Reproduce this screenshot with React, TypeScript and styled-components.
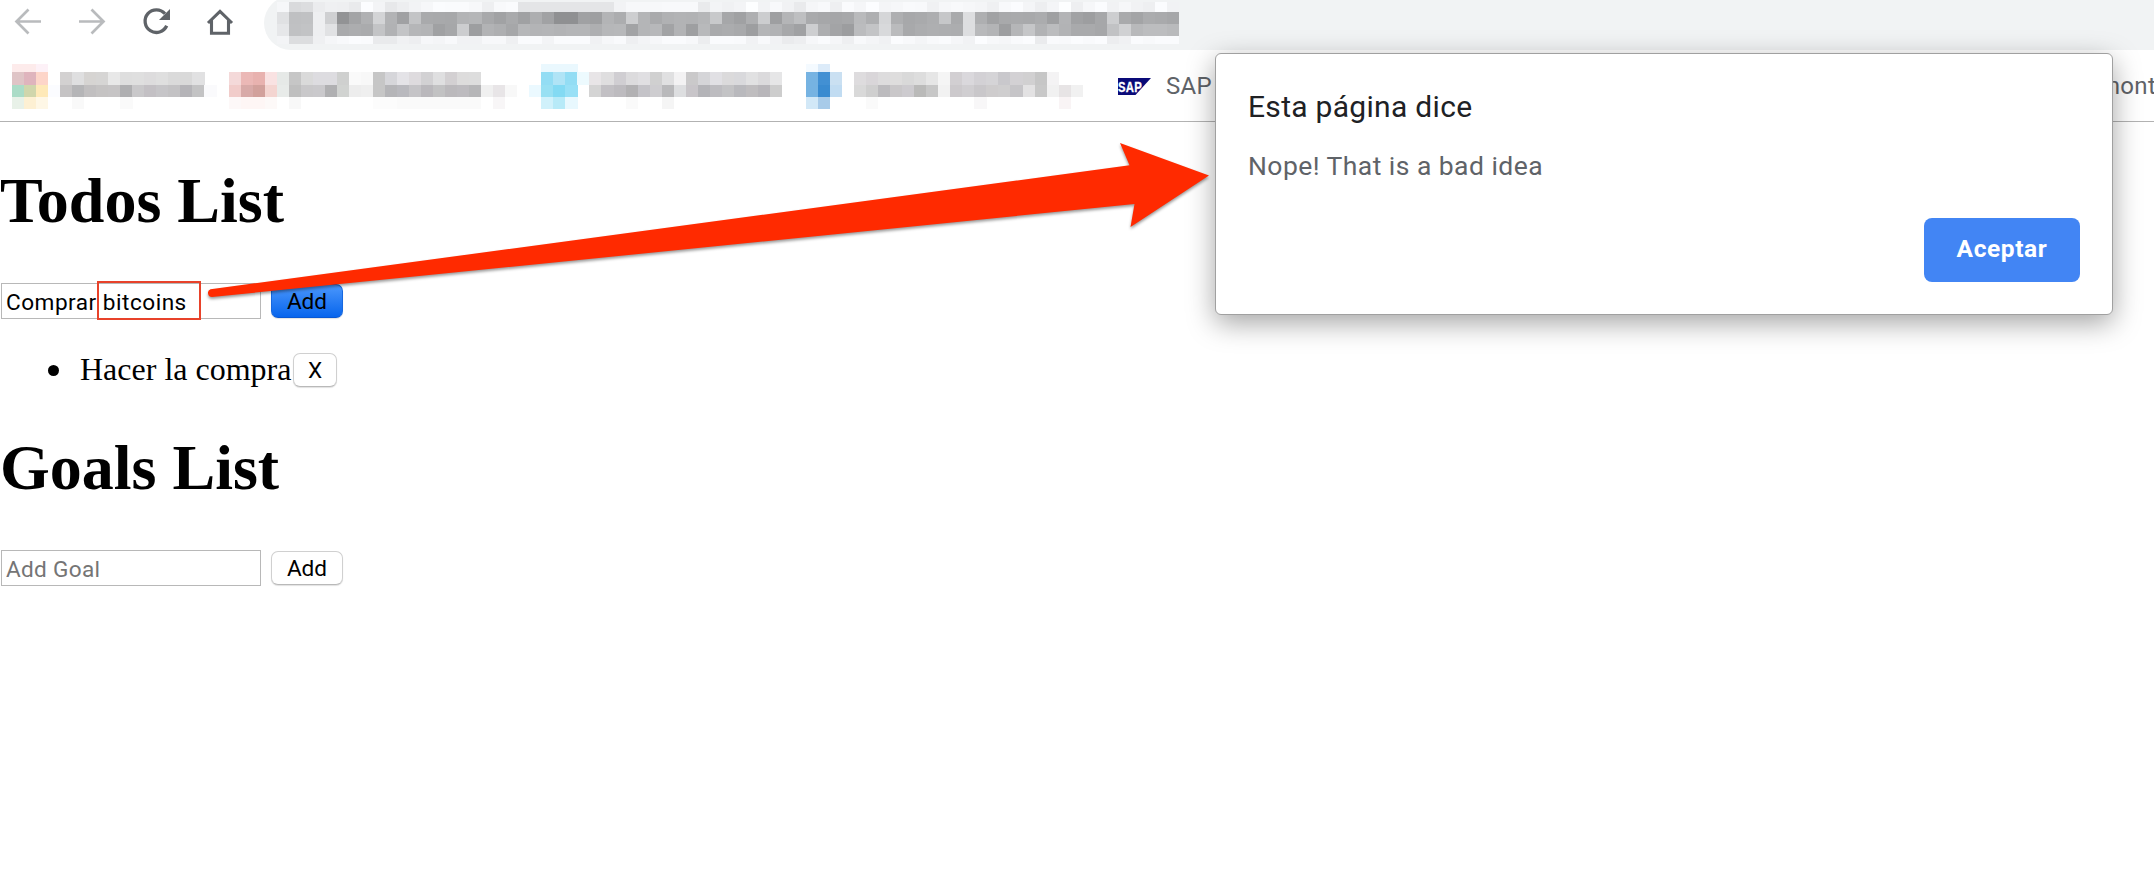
import React from "react";
import styled, { createGlobalStyle } from "styled-components";

const GlobalStyle = createGlobalStyle`
  * { box-sizing: border-box; }
  body { margin: 0; background: #fff; overflow: hidden; }
`;

const ui = `Roboto, "Liberation Sans", sans-serif`;

const Screen = styled.div`
  position: relative;
  width: 2154px;
  height: 892px;
  overflow: hidden;
  background: #fff;
`;

const Chrome = styled.header`
  height: 122px;
  border-bottom: 1px solid #b2b2b2;
`;

const Toolbar = styled.div`
  display: flex;
  height: 50px;
  overflow: hidden;
`;

const NavIcons = styled.svg`
  flex: none;
  width: 264px;
  height: 50px;
`;

const AddressBar = styled.div`
  flex: 1;
  height: 54px;
  margin-top: -4px;
  padding: 6px 0 0 13px;
  border-radius: 27px 0 0 27px;
  background: #f1f3f4;
`;

const Bookmarks = styled.div`
  display: flex;
  align-items: center;
  height: 71px;
  font: 24px/28px ${ui};
  letter-spacing: 0.3px;
  color: #5f6368;
  white-space: nowrap;
`;

const BookmarkMosaic = styled.svg`
  flex: none;
  width: 1106px;
  height: 45px;
  margin: 2px 0 0 12px;
`;

const SapLogo = styled.svg`
  flex: none;
  width: 33px;
  height: 17px;
  margin: 2px 15px 0 0;
`;

const BookmarkLabel = styled.span<{ $width: number }>`
  flex: none;
  width: ${(p) => p.$width}px;
`;

const Content = styled.main`
  font-family: "Liberation Serif", "Times New Roman", serif;
  color: #000;
`;

const Heading = styled.h1`
  margin: 0;
  font-size: 64px;
  line-height: 74px;
  font-weight: 700;
`;

const Section = styled.section<{ $top: number }>`
  padding-top: ${(p) => p.$top}px;
`;

const Form = styled.div`
  display: flex;
  align-items: center;
  gap: 10px;
  height: 36px;
  margin: 45px 0 0 1px;
`;

const TextField = styled.input`
  width: 260px;
  height: 36px;
  padding: 2px 0 0 4px;
  border: 1px solid #b8b8b8;
  border-radius: 0;
  outline: none;
  background: #fff;
  font: 22.6px/28px ${ui};
  letter-spacing: 0.5px;
  color: #000;
  &::placeholder { color: #757575; opacity: 1; letter-spacing: 0.3px; }
`;

const Button = styled.button<{ $primary?: boolean; $width?: number }>`
  width: ${(p) => p.$width ?? 72}px;
  height: 34px;
  padding: 1px 0 0;
  border: 1px solid ${(p) => (p.$primary ? "#1768df" : "#d0d0d0")};
  border-bottom-color: ${(p) => (p.$primary ? "#0858d4" : "#b9b9b9")};
  border-radius: 7px;
  background: ${(p) => (p.$primary ? "linear-gradient(#4b97fc, #0765ed)" : "#fff")};
  box-shadow: 0 1px 1px rgba(0, 0, 0, 0.12);
  font: 22.6px/28px ${ui};
  color: #000;
`;

const TodoList = styled.ul`
  margin: 0;
  padding: 34px 0 0 80px;
  list-style: none;
`;

const TodoItem = styled.li`
  display: flex;
  align-items: center;
  height: 34px;
  font-size: 32px;
  line-height: 36px;
  &::before {
    content: "";
    width: 11px;
    height: 11px;
    margin: 0 21px 0 -32px;
    border-radius: 50%;
    background: #000;
  }
`;

const TodoText = styled.span`
  width: 213px;
  padding-bottom: 2px;
  white-space: nowrap;
`;

const Highlight = styled.div`
  position: absolute;
  left: 97px;
  top: 281px;
  width: 104px;
  height: 39px;
  border: 2px solid #e8422a;
`;

const Pointer = styled.svg`
  position: absolute;
  left: 0;
  top: 0;
  filter: drop-shadow(0 2px 1.5px rgba(0, 0, 0, 0.4));
`;

const Dialog = styled.div`
  position: absolute;
  left: 1215px;
  top: 53px;
  width: 898px;
  height: 262px;
  padding: 33px 32px 32px 32px;
  display: flex;
  flex-direction: column;
  border: 1px solid #a0a0a0;
  border-radius: 6px;
  background: #fff;
  box-shadow: 0 8px 28px rgba(0, 0, 0, 0.36);
  font-family: ${ui};
`;

const DialogTitle = styled.div`
  font-size: 30px;
  line-height: 40px;
  letter-spacing: 0.3px;
  color: #202124;
`;

const DialogMessage = styled.div`
  margin-top: 22px;
  font-size: 26.5px;
  line-height: 34px;
  letter-spacing: 0.45px;
  color: #5f6368;
`;

const AcceptButton = styled.button`
  align-self: flex-end;
  width: 156px;
  height: 64px;
  margin-top: auto;
  padding: 0 0 2px;
  border: 0;
  border-radius: 8px;
  background: #4285f4;
  font: 700 24.5px/28px ${ui};
  letter-spacing: 0.6px;
  color: #fff;
`;

const CELL = 12.03;

/* Obscured address: one two-digit grey level per cell. */
const addressRows = [
  { y: 0, h: 10, v: "f6d9dcebefeee9fcf3e7edf2f6fbfafaf7eef8fae3e4e4e4e4e4e4e4f2f7f7f7f8f8f8e9f3f0f3fdf2f8f1e9f5f8eefaf5fcf4f6f9f8f0f6f8f6f4eff8fbf4edf4fdeef6fbf1f6f1eefbf1" },
  { y: 10, h: 12, v: "e0bfc0eecf92a3b0d3b2a0c3a9a8a7b3b5a8a1a9a0ada18f8fa09eb3accdb4a9b0b2b1b5c8a6a0aecc9eb4bea9a6a5a7b9aed5aea7a9adc6a9ddaea1a8a9a8ab9fb3a19da6cda9a3aba9a6" },
  { y: 22, h: 12, v: "e6c0c2eee1a9acaac3b1c3b5b3a0a6cc9db2aea6b6b3b4b2b4b4aeb6b7a2b4b7a2b29eb8a9aba89db4b1a7a0cdada39cbbc3d8baa8acaeadacddb8b39db5c5b1bbb2a9a9a6c1d0b8bcbcb9" },
  { y: 34, h: 8, v: "f3dcdceff5f8fbfae9e9f0edf6f4f8f1f1f7f7effafaf3fafafaf0f6f9eef3f6fafaf7ecfafaf9f1f8f1eaedf6faf5eef8f4f0fbf8f4f8faf5f1fcf7f5f9fbeaf9f8fbf9fbecf0faf8fafa" },
];

/* Obscured bookmarks: runs of colours, each starting at a given column. */
const bookmarkRows: { y: number; h: number; runs: [number, string][] }[] = [
  { y: 0, h: 8, runs: [
    [0, "fdebeb fdebeb fdf1f7"], [44, "eaf8fe eaf8fe eaf8fe"], [66, "f4faff dcebf9"],
  ] },
  { y: 8, h: 12.5, runs: [
    [0, "dfc4c6 dfb4bd fdd5c9"],
    [4, "d3d1d1 dfdfe0 d6d4d2 d6d5d4 e8e8e8 dedede dfdfdf dddcdd dfdfdf dadada d9d9d9 e1e1e2"],
    [18, "f4d9d9 ebb8b6 e8b2af f9e2e2 e6e9e7 c6c6c6 dadada dddce0 dddce0 cfd0cf fafafa f8f8f8 c6c6c6 d6d6da e4e3e7 dedbde d2d1d3 dfdfe0 d3d0d2 dddcdc dddddd"],
    [44, "93ddf4 b0e4f6 93ddf4 edfafe e8e5e7 dfdedf d0ced2 dcdbdd e0dfe2 d0d0d0 e0e0e1 f3f2f3 cac9ca d5d5d8 e1e0e4 dbdadb d9d9dc e1e1e2 dbdadc e6e6e7"],
    [66, "76b3e2 4290d3 cae0f2"],
    [70, "dedcde d9d6d9 dddcdd dedddd d9d9d9 dddddd e6e6e6 f5f5f5 d2cfd2 dad8dc d3d1d5 d5d4d7 c9c8cc d3d1d4 d1d0d1 c6c6c6 f4f3f4"],
  ] },
  { y: 20.5, h: 12, runs: [
    [0, "abdcc7 d0d6ac fee9b8 fbfcff"],
    [4, "c5c3c4 b5b5b7 c1bfc0 c5c3c3 c6c4c5 afafb1 c9c8ca c3c0c4 c6c5c8 c3c2c4 b5b4b8 c3c3c4 fafafc"],
    [18, "f1ccca d8aaa8 d2a19c f4d5d1 e8ebe9 bfbfbf c9c8ca cac9cc b0b0b2 d1d3d1 ededed efefef c6c6c6 b5b5b8 b9b9be c5c4c7 bab8bc c2c2c3 bbb9bc bdbbbf b6b6b8 f0f0f0 e8e5e7 f8f8f8"],
    [43, "ebf9ff 98e0f3 83daf3 98e0f6"],
    [48, "d4d4d4 c2c0c4 bdbbbf b2b1b3 c4c3c8 cecdd0 b9b9bb dddee0 c8c5c9 b4b4b8 bdbcc0 c3c3c5 b9b9bd bfbdbf b8b6ba cdcdcd"],
    [66, "76b3e2 3a8bd0 c1dcf2"],
    [70, "d9d9d9 cfcfcf bcbbbe c9c7c9 cdcbcf babab9 c7c7c7 f2f2f2 ccc9cc d0ced1 c9c7ca cecccd cfcecf c6c5c8 e3e2e3 c8c8c8 f1f1f1 e7e4e5 f1f1f1"],
  ] },
  { y: 32.5, h: 12, runs: [
    [0, "e8f1e8 fdf0d3 fef7e6"], [5, "f9f9f9"], [9, "fafafa"],
    [18, "fdf8f8 fef6f5 fef6f5 fdf9f8"], [23, "f8f8f8"],
    [30, "fcfcfc fcfcfc fafafa fafafa fafafa fafafa fafafa fafafa fafafa"], [40, "f8f6f7"],
    [44, "d0f1fb b7eaf8 e8f8fe"], [51, "fafafa"], [54, "f5f5f5"],
    [66, "d2e8f7 a8cbe9"], [71, "fafafa"], [80, "f8f7f8"], [87, "f9f4f5"],
  ] },
];

const toGrey = (hex: string) => {
  const n = parseInt(hex, 16);
  return `rgb(${n}, ${Math.min(255, n + 1)}, ${Math.min(255, n + 3)})`;
};

function AddressMosaic() {
  return (
    <svg width="920" height="42" shapeRendering="crispEdges">
      {addressRows.map((row) =>
        (row.v.match(/../g) ?? []).map((hex, i) => (
          <rect key={`${row.y}-${i}`} x={i * CELL} y={row.y} width={CELL + 0.2} height={row.h} fill={toGrey(hex)} />
        ))
      )}
    </svg>
  );
}

function BookmarksMosaic() {
  return (
    <BookmarkMosaic shapeRendering="crispEdges">
      {bookmarkRows.map((row) =>
        row.runs.map(([start, colours]) =>
          colours.split(" ").map((c, i) => (
            <rect key={`${row.y}-${start + i}`} x={(start + i) * CELL} y={row.y} width={CELL + 0.2} height={row.h} fill={`#${c}`} />
          ))
        )
      )}
    </BookmarkMosaic>
  );
}

export default function App() {
  return (
    <Screen>
      <GlobalStyle />
      <Chrome>
        <Toolbar>
          <NavIcons viewBox="0 0 264 50" fill="none">
            <g stroke="#b9bbbd" strokeWidth="2.7">
              <path d="M41 21.5H17M28.5 9.5L16.5 21.5L28.5 33.5" />
              <path d="M79 21.5H103M91.5 9.5L103.5 21.5L91.5 33.5" />
            </g>
            <g stroke="#5f6368">
              <path d="M165 13.8A11.3 11.3 0 1 0 166.7 25.8" strokeWidth="3.3" />
              <path d="M170 9V20H159Z" fill="#5f6368" stroke="none" />
              <path d="M208 23L220 11.5L232 23M211.5 20V33.3H228.5V20" strokeWidth="3.1" />
            </g>
          </NavIcons>
          <AddressBar>
            <AddressMosaic />
          </AddressBar>
        </Toolbar>
        <Bookmarks>
          <BookmarksMosaic />
          <SapLogo viewBox="0 0 33 17">
            <path d="M0 0H33L17.5 17H0Z" fill="#0a0a78" />
            <text x="0" y="13.5" fontFamily="Liberation Sans, sans-serif" fontWeight="700" fontSize="14.5" textLength="24" lengthAdjust="spacingAndGlyphs" fill="#fff" stroke="#fff" strokeWidth="0.3">SAP</text>
          </SapLogo>
          <BookmarkLabel $width={933}>SAP</BookmarkLabel>
          <BookmarkLabel $width={60}>mont</BookmarkLabel>
        </Bookmarks>
      </Chrome>

      <Content>
        <Section $top={42}>
          <Heading>Todos List</Heading>
          <Form>
            <TextField defaultValue="Comprar bitcoins" />
            <Button $primary>Add</Button>
          </Form>
          <TodoList>
            <TodoItem>
              <TodoText>Hacer la compra</TodoText>
              <Button $width={44}>X</Button>
            </TodoItem>
          </TodoList>
        </Section>
        <Section $top={44}>
          <Heading>Goals List</Heading>
          <Form>
            <TextField placeholder="Add Goal" />
            <Button>Add</Button>
          </Form>
        </Section>
      </Content>

      <Highlight />
      <Dialog role="dialog">
        <DialogTitle>Esta página dice</DialogTitle>
        <DialogMessage>Nope! That is a bad idea</DialogMessage>
        <AcceptButton>Aceptar</AcceptButton>
      </Dialog>
      <Pointer width="1214" height="330">
        <path d="M210.5 289.3L1129.5 165.3L1120 143L1209 175.5L1130.5 227L1134.5 204L212 297A4 4 0 0 1 210.5 289.3Z" fill="#ff2a00" />
      </Pointer>
    </Screen>
  );
}
